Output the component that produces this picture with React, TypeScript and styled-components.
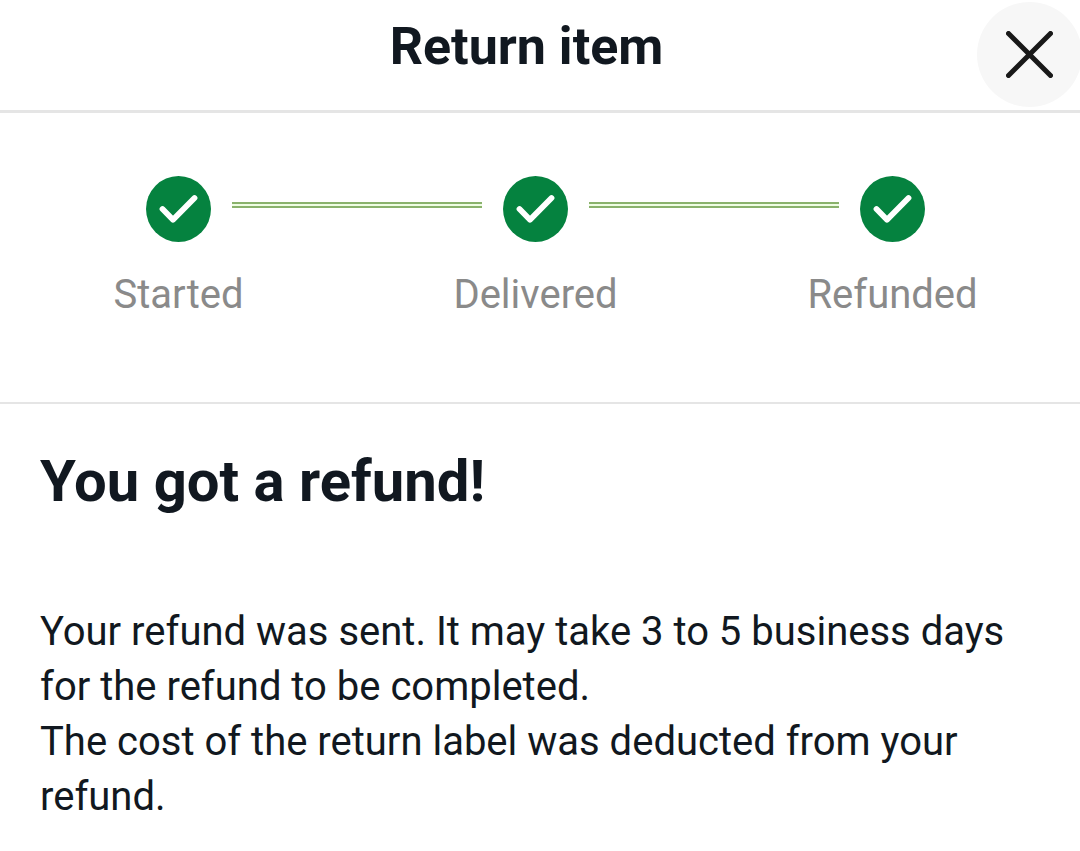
import React from "react";
import styled, { createGlobalStyle } from "styled-components";

const GlobalStyle = createGlobalStyle`
  *, *::before, *::after { box-sizing: border-box; }
  body {
    margin: 0;
    background: #ffffff;
    color: #111820;
    font-family: Roboto, "Liberation Sans", sans-serif;
  }
`;

const Header = styled.header`
  display: grid;
  grid-template-columns: 103px 1fr 103px;
  align-items: start;
  overflow: hidden;
  padding: 2px 0 3px;
  border-bottom: 3px solid #e5e5e5;
`;

const Title = styled.h1`
  grid-column: 2;
  margin: 0;
  padding: 15px 27px 0 0;
  font-size: 52px;
  line-height: 60px;
  font-weight: 700;
  text-align: center;
`;

const CloseButton = styled.button`
  display: flex;
  align-items: center;
  justify-content: center;
  width: 105px;
  height: 105px;
  padding: 0;
  border: 0;
  border-radius: 50%;
  background: #f7f7f7;
  color: #191919;
  cursor: pointer;
`;

const Progress = styled.section`
  padding: 63px 9px 83px 0;
  border-bottom: 2px solid #e5e5e5;
`;

const Steps = styled.ol`
  display: grid;
  grid-template-columns: repeat(3, 1fr);
  margin: 0;
  padding: 0;
  list-style: none;
`;

const Step = styled.li`
  display: flex;
  flex-direction: column;
  gap: 29px;
`;

const Track = styled.div`
  display: grid;
  grid-template-columns: 1fr 65px 1fr;
  column-gap: 21px;
`;

const Line = styled.span<{ $visible: boolean }>`
  visibility: ${(p) => (p.$visible ? "visible" : "hidden")};
  height: 6px;
  margin-top: 26px;
  border: solid #8ab26c;
  border-width: 2px 0;
  background: #effde3;
`;

const StepLabel = styled.span`
  color: #8a8a8a;
  font-size: 40px;
  line-height: 48px;
  text-align: center;
`;

const Message = styled.main`
  padding: 45px 40px 24px;
`;

const Heading = styled.h2`
  margin: 0 0 91px;
  font-size: 58px;
  line-height: 64px;
  font-weight: 700;
`;

const Text = styled.p`
  margin: 0;
  font-size: 40px;
  line-height: 55px;
`;

const steps = ["Started", "Delivered", "Refunded"];

const CheckIcon = () => (
  <svg width="65" height="66" viewBox="0 0 65 66" aria-hidden="true">
    <ellipse cx="32.5" cy="33" rx="32.5" ry="33" fill="#05823f" />
    <path d="M16.5 33 L27 43.7 L48.5 22" fill="none" stroke="#fff" strokeWidth="5.8" strokeLinecap="round" strokeLinejoin="round" />
  </svg>
);

export default function App() {
  return (
    <>
      <GlobalStyle />
      <Header>
        <Title>Return item</Title>
        <CloseButton type="button" aria-label="Close">
          <svg width="47" height="47" viewBox="0 0 47 47" aria-hidden="true">
            <path d="M2.5 2.5 L44.5 44.5 M44.5 2.5 L2.5 44.5" stroke="currentColor" strokeWidth="5" strokeLinecap="round" />
          </svg>
        </CloseButton>
      </Header>
      <Progress aria-label="Return progress">
        <Steps>
          {steps.map((label, i) => (
            <Step key={label}>
              <Track>
                <Line $visible={i > 0} />
                <CheckIcon />
                <Line $visible={i < steps.length - 1} />
              </Track>
              <StepLabel>{label}</StepLabel>
            </Step>
          ))}
        </Steps>
      </Progress>
      <Message>
        <Heading>You got a refund!</Heading>
        <Text>Your refund was sent. It may take 3 to 5 business days for the refund to be completed.</Text>
        <Text>The cost of the return label was deducted from your refund.</Text>
      </Message>
    </>
  );
}
